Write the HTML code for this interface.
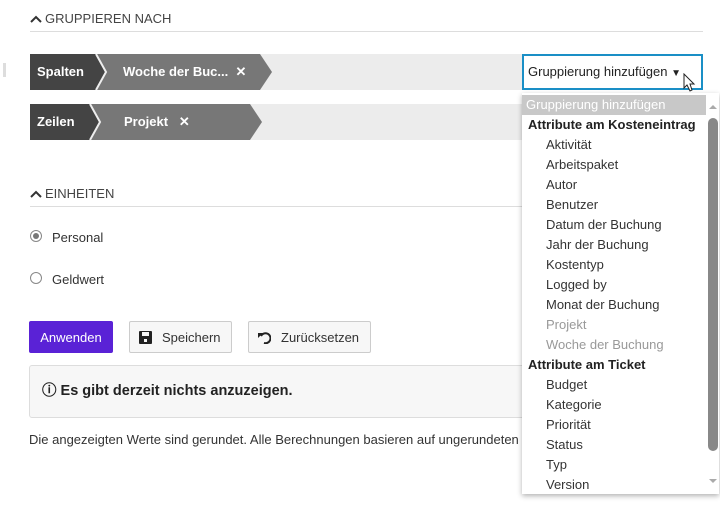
<!DOCTYPE html>
<html><head><meta charset="utf-8"><style>
body{margin:0;width:720px;height:505px;background:#fff;font-family:"Liberation Sans",sans-serif;font-size:13px;color:#333;position:relative;overflow:hidden}
.a{position:absolute}
.hd{left:30px;width:673px;border-bottom:1px solid #ddd;font-size:13px;color:#444;padding-bottom:5px}
.bar{left:30px;width:673px;height:36px;background:#ececec}
.chip{position:absolute;top:0;height:36px;color:#fff;font-weight:bold;line-height:36px}
.btn{position:absolute;top:321px;height:32px;line-height:32px;border:1px solid #ccc;border-radius:2px;background:#f7f7f7;box-sizing:border-box;color:#333}
.dd{left:522px;top:93px;width:197px;height:401px;background:#fff;box-shadow:0 2px 5px rgba(0,0,0,.3);overflow:hidden}
.dd div{height:20px;line-height:20px;white-space:nowrap}
.g{font-weight:bold;padding-left:6px;color:#222}
.i{padding-left:24px;color:#333}
.dis{color:#999}
</style></head><body>
<div class="a hd" style="top:11px"><svg width="12" height="8" style="margin-right:3px"><path d="M1 7 L6 2 L11 7" fill="none" stroke="#333" stroke-width="2"/></svg>GRUPPIEREN NACH</div>
<div class="a" style="left:3px;top:63px;width:3px;height:14px;background:#ddd"></div>
<div class="a bar" style="top:54px">
<svg class="a" style="left:0;top:0" width="250" height="36"><polygon points="60,0 230,0 242,18 230,36 60,36" fill="#777"/><polygon points="0,0 66,0 76,18 66,36 0,36" fill="#444"/><polyline points="66,0 76,18 66,36" fill="none" stroke="#eee" stroke-width="2"/></svg>
<div class="chip" style="left:7px">Spalten</div>
<div class="chip" style="left:93px">Woche der Buc... &nbsp;✕</div>
</div>
<div class="a" style="left:522px;top:54px;width:181px;height:36px;border:2px solid #1a8fc6;box-sizing:border-box;background:#fff;line-height:32px;padding-left:4px;color:#222;font-size:13px">Gruppierung hinzufügen <span style="font-size:10px">▼</span></div>
<svg class="a" style="left:683px;top:73px" width="14" height="20"><path d="M1 1 L1 15 L4 12 L7 18 L9 17 L7 11 L11 11 Z" fill="#fff" stroke="#222" stroke-width="1"/></svg>
<div class="a bar" style="top:104px">
<svg class="a" style="left:0;top:0" width="250" height="36"><polygon points="60,0 220,0 232,18 220,36 60,36" fill="#777"/><polygon points="0,0 60,0 70,18 60,36 0,36" fill="#444"/><polyline points="60,0 70,18 60,36" fill="none" stroke="#eee" stroke-width="2"/></svg>
<div class="chip" style="left:7px">Zeilen</div>
<div class="chip" style="left:94px">Projekt &nbsp;&nbsp;✕</div>
</div>
<div class="a hd" style="top:186px"><svg width="12" height="8" style="margin-right:3px"><path d="M1 7 L6 2 L11 7" fill="none" stroke="#333" stroke-width="2"/></svg>EINHEITEN</div>
<div class="a" style="left:30px;top:230px;width:12px;height:12px;border:1px solid #888;border-radius:50%;box-sizing:border-box"><div style="margin:2px;width:6px;height:6px;border-radius:50%;background:#777"></div></div>
<div class="a" style="left:52px;top:230px">Personal</div>
<div class="a" style="left:30px;top:272px;width:12px;height:12px;border:1px solid #888;border-radius:50%;box-sizing:border-box"></div>
<div class="a" style="left:52px;top:272px">Geldwert</div>
<div class="btn" style="left:29px;width:84px;background:#5a22d6;border-color:#5a22d6;color:#fff;text-align:center">Anwenden</div>
<div class="btn" style="left:129px;width:103px;padding-left:32px"><svg class="a" style="left:9px;top:9px" width="13" height="13"><rect width="13" height="13" rx="1" fill="#222"/><rect x="3" y="1" width="7" height="4" fill="#f7f7f7"/><rect x="5" y="8" width="3" height="3" fill="#f7f7f7"/></svg>Speichern</div>
<div class="btn" style="left:248px;width:123px;padding-left:32px"><svg class="a" style="left:9px;top:10px" width="13" height="12"><path d="M3 4 A5 5 0 1 1 6 11" fill="none" stroke="#222" stroke-width="2"/><path d="M0 1 L5 1 L0 6Z" fill="#222"/></svg>Zurücksetzen</div>
<div class="a" style="left:29px;top:365px;width:500px;height:53px;background:#f7f7f7;border:1px solid #ddd;border-radius:3px;box-sizing:border-box;line-height:51px;padding-left:12px;font-weight:bold;font-size:14.5px;color:#222">ⓘ Es gibt derzeit nichts anzuzeigen.</div>
<div class="a" style="left:29px;top:432px;white-space:nowrap;width:493px;overflow:hidden">Die angezeigten Werte sind gerundet. Alle Berechnungen basieren auf ungerundeten Werten.</div>
<div class="a dd">
<div style="background:#c8c8c8;color:#fff;padding-left:4px;width:180px;margin-top:2px">Gruppierung hinzufügen</div>
<div class="g">Attribute am Kosteneintrag</div>
<div class="i">Aktivität</div><div class="i">Arbeitspaket</div><div class="i">Autor</div><div class="i">Benutzer</div><div class="i">Datum der Buchung</div><div class="i">Jahr der Buchung</div><div class="i">Kostentyp</div><div class="i">Logged by</div><div class="i">Monat der Buchung</div><div class="i dis">Projekt</div><div class="i dis">Woche der Buchung</div>
<div class="g">Attribute am Ticket</div>
<div class="i">Budget</div><div class="i">Kategorie</div><div class="i">Priorität</div><div class="i">Status</div><div class="i">Typ</div><div class="i">Version</div>
<div class="a" style="left:186px;top:25px;width:10px;height:333px;border-radius:5px;background:#888;position:absolute"></div>
<div class="a" style="left:187px;top:8px;width:0;height:0;border:4px solid transparent;border-bottom-color:#aaa;position:absolute"></div>
<div class="a" style="left:187px;top:386px;width:0;height:0;border:4px solid transparent;border-top-color:#aaa;position:absolute"></div>
</div>
</body></html>
